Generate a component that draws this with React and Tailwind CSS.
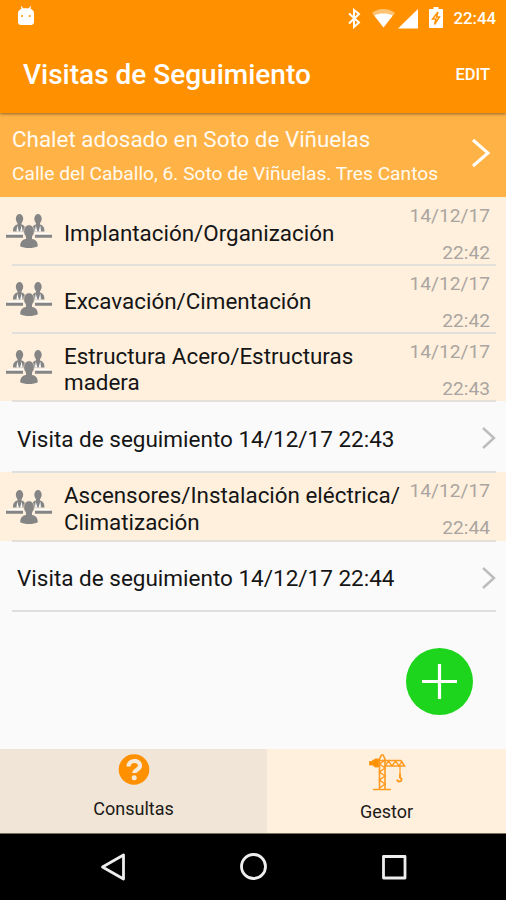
import React from "react";

const visits = [
    { type: "phase", title: "Implantación/Organización", date: "14/12/17", time: "22:42", height: "h-[68px]" },
    { type: "phase", title: "Excavación/Cimentación", date: "14/12/17", time: "22:42", height: "h-[68px]" },
    { type: "phase", title: "Estructura Acero/Estructuras madera", date: "14/12/17", time: "22:43", height: "h-[68px]" },
    { type: "visit", title: "Visita de seguimiento 14/12/17 22:43", height: "h-[71px]" },
    { type: "phase", title: "Ascensores/Instalación eléctrica/ Climatización", date: "14/12/17", time: "22:44", height: "h-[69px]" },
    { type: "visit", title: "Visita de seguimiento 14/12/17 22:44", height: "h-[70px]" },
];

const Person = ({ x }) => (
    <g transform={`translate(${x} 0)`}>
        <ellipse cx="0" cy="4.8" rx="3.7" ry="4.8" />
        <path d="M-2 8h4v2.500c3 .9 4.500 2.500 4.500 7H-6.500c0-4.500 1.500-6.100 4.500-7z" />
        <path d="M-2.300 11.500-.6 17.500h-2.400zM2.300 11.500.6 17.500h2.400z" fill="#fff" />
    </g>
);

const MeetingIcon = () => (
    <svg width="46" height="35" viewBox="0 0 46 35" fill="#858585" className="-mt-px shrink-0">
        <Person x={13.500} />
        <Person x={32} />
        <path d="M2 19h15v1.500H2zM29 19h15v1.500H29z" fill="#fff" />
        <path d="M0 20.700h17v3H0zM29 20.700h17v3H29z" />
        <ellipse cx="23" cy="17.300" rx="5.300" ry="6.500" stroke="#fff0de" strokeWidth=".6" />
        <path d="M20 21h6v4c4 .8 5.800 3 5.800 7.300-4 2.400-13.600 2.400-17.600 0 0-4.300 1.800-6.500 5.800-7.300z" />
    </svg>
);

const CraneIcon = () => (
    <svg width="38" height="37" viewBox="0 0 38 37" fill="none" stroke="#ff9a1f" strokeWidth="1.600" className="ml-0.5">
        <path d="M10.500 35V5l2-4h1.500l2 4v30M4 35.500h18" />
        <path d="m10.500 34 5.500-4-5.500-4 5.500-4-5.500-4 5.500-4-5.500-4L16 6" strokeWidth="1.500" />
        <path d="M3 6.500h29M16 12h19.500l-3.500-5.500" />
        <path d="m16 12 3.500-5 3.500 5 3.500-5 3.500 5 3-5" strokeWidth="1.400" />
        <path d="M.5 7.500h3L6 5h3.500v8H6L3.500 11h-3z" fill="#ff9100" strokeWidth="1" />
        <path d="M31 12v8" strokeWidth="1.200" />
        <path d="M31 19.500v4c2.500 1 1.800 4-.5 4-1.500 0-2.300-.8-2.300-2" strokeWidth="2" />
    </svg>
);

const StatusBar = () => (
    <div className="flex h-[37px] items-center justify-between pl-[18px] pr-[10px]">
        <svg width="16" height="20" viewBox="0 0 16 20" fill="#fff" className="-mt-[7px]">
            <path d="M0 8.500C0 6 1.500 4.500 3.500 3.800L2.800.5l2.500 2.700h5.400L13.200.5l-.7 3.300C14.500 4.500 16 6 16 8.500V17c0 1.800-1.200 3-3 3H3c-1.800 0-3-1.200-3-3z" />
            <circle cx="4" cy="11" r="1" fill="#ff9100" />
            <circle cx="11.700" cy="11" r="1" fill="#ff9100" />
        </svg>
        <div className="flex items-center">
            <svg width="13" height="21" viewBox="0 0 13 21" fill="none" stroke="#fff" strokeWidth="2">
                <path d="m1 5.500 10 9-5 4.500V2l5 4-10 9.500" />
            </svg>
            <svg width="23" height="19" viewBox="0 0 23 19" className="ml-[11px]" fill="#fff">
                <path d="M0 4C6.500-1.200 16.500-1.200 23 4L11.500 18.500z" opacity=".45" />
                <path d="M2.300 6.500c5.500-2.600 12.900-2.600 18.400 0l-9.200 12z" />
            </svg>
            <svg width="20" height="20" viewBox="0 0 20 20" className="ml-[3px]" fill="#fff">
                <path d="M0 19.500 20 0v19.500z" />
            </svg>
            <svg width="14" height="21" viewBox="0 0 14 21" className="ml-[11px] -mt-0.5" fill="#fff">
                <path d="M4.500 0h5v2H13q1 0 1 1v17q0 1-1 1H1q-1 0-1-1V3q0-1 1-1h3.500z" />
                <path d="M9 5 3.500 12H7l-1.500 5.500L10.500 10H7.500z" fill="none" stroke="#ff9100" strokeWidth="1.400" />
            </svg>
            <span className="ml-[10px] text-[16.800px] font-medium leading-none">22:44</span>
        </div>
    </div>
);

const PhaseRow = ({ visit }) => (
    <div className={`${visit.height} bg-[#fff0de]`}>
        <div className="flex h-full items-center pl-1.5 pt-0.5">
            <MeetingIcon />
            <div className="ml-3 w-[342px] shrink-0 pt-0.5 text-[22.400px] leading-[26.500px] text-[#151515]">{visit.title}</div>
            <div className="-ml-[62px] flex flex-1 flex-col items-end pr-4 pt-[3px] text-[19.200px] leading-[37px] text-[#aaa5a0]">
                <span>{visit.date}</span>
                <span>{visit.time}</span>
            </div>
        </div>
        <div className="relative -mt-px ml-3 mr-2.5 h-0.5 bg-[#e3e0dc]" />
    </div>
);

const VisitRow = ({ visit }) => (
    <div className={visit.height}>
        <div className="flex h-full items-center justify-between pl-[17px] pr-[10px]">
            <span className="whitespace-nowrap pt-1 text-[22.500px] leading-[26px] text-[#151515]">{visit.title}</span>
            <svg width="15" height="24" viewBox="0 0 15 24" fill="none" stroke="#bcbcbc" strokeWidth="2.400" className="mt-[3px]">
                <path d="m2 2 11 10L2 22" />
            </svg>
        </div>
        <div className="relative -mt-px ml-3 mr-2.5 h-0.5 bg-[#dfdfdf]" />
    </div>
);

const App = () => {
    return (
        <div className="flex h-[900px] w-[506px] flex-col overflow-hidden bg-[#fafafa] font-[Roboto,sans-serif]">
            {/* Header */}
            <header className="z-10 h-[113px] shrink-0 bg-[#ff9100] text-white shadow-[0_1px_3px_rgba(0,0,0,0.450)]">
                <StatusBar />
                <div className="flex h-[76px] items-center justify-between pl-[23px] pr-4">
                    <h1 className="text-[28px] font-medium">Visitas de Seguimiento</h1>
                    <button className="text-[16.500px] font-medium">EDIT</button>
                </div>
            </header>

            {/* Site */}
            <section className="flex h-[84px] shrink-0 items-center justify-between bg-[#ffb347] pl-3 pr-[15px] text-[#fffaf0]">
                <div className="whitespace-nowrap pt-0.5">
                    <p className="text-[22.400px] leading-[35px]">Chalet adosado en Soto de Viñuelas</p>
                    <p className="text-[19.200px] leading-[33px]">Calle del Caballo, 6. Soto de Viñuelas. Tres Cantos</p>
                </div>
                <svg width="20" height="30" viewBox="0 0 20 30" fill="none" stroke="#fff" strokeWidth="3" className="-mt-1">
                    <path d="m2 2 15 13L2 28" />
                </svg>
            </section>

            {/* Visits */}
            <main className="flex-1">
                {visits.map((visit, i) =>
                    visit.type === "phase" ? <PhaseRow key={i} visit={visit} /> : <VisitRow key={i} visit={visit} />
                )}
                <div className="flex justify-end pr-[33px] pt-[37px]">
                    <button className="flex size-[67px] items-center justify-center rounded-full bg-[#1dd51d]">
                        <svg width="35" height="35" viewBox="0 0 35 35" stroke="#fff" strokeWidth="3.200">
                            <path d="M17.500 0v35M0 17.500h35" />
                        </svg>
                    </button>
                </div>
            </main>

            {/* Tabs */}
            <div className="flex h-[84px] shrink-0 text-[18px] leading-[22px] text-[#1c1a17]">
                <div className="flex w-[267px] flex-col items-center bg-[#f0e5d6] pt-[5px]">
                    <svg width="32" height="32" viewBox="0 0 32 32" fill="none">
                        <circle cx="16" cy="15.500" r="15.300" fill="#ff9100" />
                        <path d="M10.500 12.500c.3-7.500 11.500-7 11.500-.7 0 4-5.700 3.700-5.700 7.200" stroke="#f6eadb" strokeWidth="4.200" />
                        <circle cx="16.200" cy="23.700" r="2.500" fill="#f6eadb" />
                    </svg>
                    <span className="mt-3">Consultas</span>
                </div>
                <div className="flex flex-1 flex-col items-center bg-[#fff0de] pt-[5px]">
                    <CraneIcon />
                    <span className="mt-2.5">Gestor</span>
                </div>
            </div>

            {/* Android navigation */}
            <nav className="h-[67px] shrink-0 border-t border-[#77705f] bg-black">
                <svg width="506" height="66" viewBox="0 0 506 66" fill="none" stroke="#eee" strokeWidth="2.800" strokeLinejoin="round">
                    <path d="M123.500 21v24l-21-12z" />
                    <circle cx="253.500" cy="32.500" r="12" />
                    <path d="M383.500 22.500h21.500v21.500h-21.500z" />
                </svg>
            </nav>
        </div>
    );
};

export default App;
